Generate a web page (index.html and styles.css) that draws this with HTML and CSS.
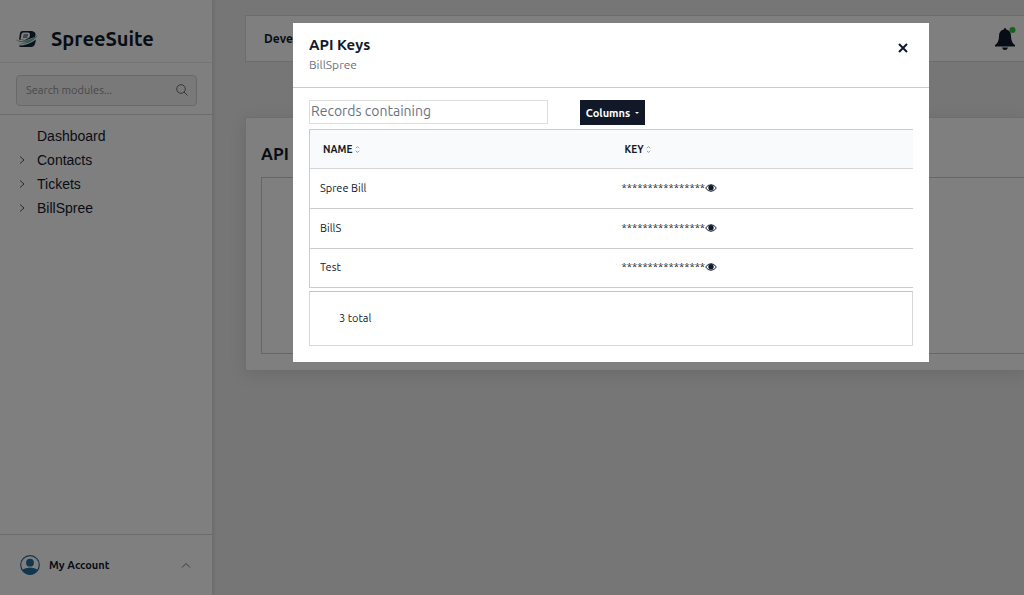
FILE: index.html
```html
<!DOCTYPE html>
<html lang="en">
<head>
<meta charset="utf-8">
<meta name="viewport" content="width=device-width, initial-scale=1">
<title>SpreeSuite</title>
<link rel="stylesheet" href="styles.css">
</head>
<body>
<div class="app">
  <aside class="sidebar">
    <div class="brand">
      <svg class="brand-logo" viewBox="0 0 22 18" aria-hidden="true">
        <path d="M3 9.500L4 3Q4.400 1 6.500 1H16q4 1 3.500 4L19 7 9 10.500z" fill="#172437"/>
        <path d="M4.500 9.500L5.500 4Q5.800 2.500 7.500 2.500H12q2 0 2 2L13.500 7.500 9 10z" fill="#fff"/>
        <path d="M7.500 5h4.500M7 7h4.500" stroke="#172437"/>
        <path d="M3 15.500q9 0 17-6L19 14q-1 3-4 3H5q-2 0-2-1.500z" fill="#172437"/>
        <path d="M0 9.500q3 2 8 1.200Q16 9.500 22 5q-4 6-10 8-7 2-10 1 6-.5 9-2-9 1-11-2.500z" fill="#62b9ac"/>
      </svg>
      <span class="brand-name">SpreeSuite</span>
    </div>
    <div class="module-search">
      <div class="search-box">
        <input class="search-input" type="text" placeholder="Search modules..." aria-label="Search modules">
        <svg class="search-icon" viewBox="0 0 12 12" aria-hidden="true"><circle cx="5" cy="5" r="4.300"/><path d="M8 8l3.500 3.500"/></svg>
      </div>
    </div>
    <nav class="nav">
      <a class="nav-item" href="#">Dashboard</a>
      <a class="nav-item" href="#"><svg class="chevron" viewBox="0 0 6 8" aria-hidden="true"><path d="M1 .5L5 4 1 7.500"/></svg>Contacts</a>
      <a class="nav-item" href="#"><svg class="chevron" viewBox="0 0 6 8" aria-hidden="true"><path d="M1 .5L5 4 1 7.500"/></svg>Tickets</a>
      <a class="nav-item" href="#"><svg class="chevron" viewBox="0 0 6 8" aria-hidden="true"><path d="M1 .5L5 4 1 7.500"/></svg>BillSpree</a>
    </nav>
    <button class="account" type="button">
      <svg class="avatar" viewBox="0 0 20 20" aria-hidden="true">
        <circle cx="10" cy="10" r="9.300" fill="none" stroke="#226f9e" stroke-width="1.200"/>
        <circle cx="10" cy="7.700" r="3.900" fill="#226f9e"/>
        <path d="M2 15q3-2.500 8-2.500t8 2.500q-3 4.700-8 4.700T2 15z" fill="#226f9e"/>
      </svg>
      <span>My Account</span>
      <svg class="account-caret" viewBox="0 0 10 6" aria-hidden="true"><path d="M1 5.500l4-4 4 4"/></svg>
    </button>
  </aside>
  <main class="main">
    <header class="topbar">
      <h1 class="topbar-title">Developer</h1>
      <button class="bell" type="button" aria-label="Notifications">
        <svg class="bell-icon" viewBox="0 0 22 24" aria-hidden="true">
          <path d="M11 1q1.200 0 1.200 1.500Q17 3.500 17 9q0 6.500 4 9v1.500H1V18q4-2.500 4-9 0-5.500 4.800-6.500Q9.800 1 11 1zM8 20.500h6q-.6 2.500-3 2.500t-3-2.500z" fill="#111a2b"/>
          <circle cx="18.500" cy="3" r="3" fill="#2bc43c"/>
        </svg>
      </button>
    </header>
    <section class="card">
      <h2 class="card-title">API Keys</h2>
      <div class="card-table"></div>
    </section>
  </main>
</div>
<div class="backdrop">
  <section class="dialog" role="dialog" aria-modal="true" aria-labelledby="dialog-title">
    <header class="dialog-head">
      <div>
        <h2 class="dialog-title" id="dialog-title">API Keys</h2>
        <p class="dialog-subtitle">BillSpree</p>
      </div>
      <button class="close" type="button" aria-label="Close">
        <svg class="close-icon" viewBox="0 0 10 10" aria-hidden="true"><path d="M1 1l8 8M9 1L1 9"/></svg>
      </button>
    </header>
    <div class="dialog-body">
      <div class="toolbar">
        <input class="filter" type="text" placeholder="Records containing" aria-label="Records containing">
        <button class="columns" type="button">Columns <span class="columns-caret"></span></button>
      </div>
      <table class="keys">
        <thead>
          <tr>
            <th>NAME <svg class="sort" viewBox="0 0 6 8" aria-hidden="true"><path d="M1 2.500l2-2 2 2M1 5.500l2 2 2-2"/></svg></th>
            <th>KEY <svg class="sort" viewBox="0 0 6 8" aria-hidden="true"><path d="M1 2.500l2-2 2 2M1 5.500l2 2 2-2"/></svg></th>
          </tr>
        </thead>
        <tbody>
          <tr><td>Spree Bill</td><td><span class="key"><span>****************</span><button class="reveal" type="button" aria-label="Show key"><svg class="eye" viewBox="0 0 12 8" aria-hidden="true"><path d="M.6 4Q3 .7 6 .7T11.400 4Q9 7.300 6 7.300T.6 4z"/><circle cx="6" cy="3.700" r="2.700"/></svg></button></span></td></tr>
          <tr><td>BillS</td><td><span class="key"><span>****************</span><button class="reveal" type="button" aria-label="Show key"><svg class="eye" viewBox="0 0 12 8" aria-hidden="true"><path d="M.6 4Q3 .7 6 .7T11.400 4Q9 7.300 6 7.300T.6 4z"/><circle cx="6" cy="3.700" r="2.700"/></svg></button></span></td></tr>
          <tr><td>Test</td><td><span class="key"><span>****************</span><button class="reveal" type="button" aria-label="Show key"><svg class="eye" viewBox="0 0 12 8" aria-hidden="true"><path d="M.6 4Q3 .7 6 .7T11.400 4Q9 7.300 6 7.300T.6 4z"/><circle cx="6" cy="3.700" r="2.700"/></svg></button></span></td></tr>
        </tbody>
      </table>
      <div class="total">3 total</div>
    </div>
  </section>
</div>
</body>
</html>
```
FILE: styles.css
```css
* { box-sizing: border-box; }
body {
  margin: 0;
  font-family: Ubuntu, "Noto Sans", sans-serif;
  font-size: 11px;
  color: #111a2b;
  background: #ececec;
}
h1, h2, p { margin: 0; }
button, input { font: inherit; color: inherit; }
button { padding: 0; border: 0; background: none; }
svg { display: block; fill: none; flex: none; }

.app { display: flex; min-height: 100vh; overflow: hidden; }
.sidebar {
  display: flex;
  flex-direction: column;
  flex: none;
  width: 213px;
  background: #fff;
  border-right: 1px solid #dcdcdc;
  box-shadow: 1px 0 3px rgba(0, 0, 0, 0.1);
}
.brand {
  display: flex;
  align-items: center;
  gap: 13px;
  height: 63px;
  padding: 15px 16px 0;
  border-bottom: 1px solid #eceae8;
}
.brand-logo { width: 22px; height: 18px; }
.brand-name { font-size: 20px; font-weight: 700; line-height: 24px; }
.module-search { padding: 12px 15px 8px 16px; border-bottom: 1px solid #d8d8d8; }
.search-box {
  display: flex;
  align-items: center;
  height: 31px;
  padding: 0 8px 2px 9px;
  background: #f3f3f3;
  border: 1px solid #d2d2d2;
  border-radius: 4px;
}
.search-input { flex: 1; min-width: 0; padding: 0; border: 0; outline: 0; background: none; font-size: 11px; }
.search-input::placeholder { color: #929292; opacity: 1; }
.search-icon { width: 12px; height: 12px; stroke: #6d6d6d; }
.nav { flex: 1; padding: 9px 16px; }
.nav-item {
  display: flex;
  align-items: center;
  position: relative;
  height: 24px;
  padding-left: 21px;
  font-family: "Liberation Sans", Arial, sans-serif;
  font-size: 14px;
  color: #111a2b;
  text-decoration: none;
}
.chevron { position: absolute; left: 3px; width: 6px; height: 8px; stroke: #555; }
.account {
  display: flex;
  align-items: center;
  gap: 9px;
  height: 61px;
  padding: 0 21px 0 20px;
  border-top: 1px solid #d8d8d8;
  font-weight: 700;
}
.avatar { width: 20px; height: 20px; }
.account-caret { width: 10px; height: 6px; margin-left: auto; stroke: #777; }

.main { flex: 1; min-width: 0; padding: 15px 0 0 32px; }
.topbar {
  display: flex;
  align-items: center;
  justify-content: space-between;
  height: 47px;
  padding: 0 8px 0 18px;
  background: #fff;
  border: 1px solid #d8d8d8;
  border-right: 0;
}
.topbar-title { font-size: 12px; }
.bell-icon { width: 22px; height: 24px; }
.card {
  margin-top: 55px;
  padding: 24px 0 16px 15px;
  background: #fff;
  border: 1px solid #dcdcdc;
  border-right: 0;
  box-shadow: 0 3px 16px rgba(0, 0, 0, 0.1);
}
.card-title { font-size: 17px; line-height: 24px; }
.card-table { height: 177px; margin-top: 11px; border: 1px solid #ccc; border-right: 0; }

.backdrop {
  position: fixed;
  inset: 0;
  padding: 23px 95px 0 293px;
  background: rgba(0, 0, 0, 0.5);
}
.dialog { background: #fff; }
.dialog-head {
  display: flex;
  align-items: center;
  justify-content: space-between;
  height: 65px;
  padding: 0 21px 0 16px;
  border-bottom: 1px solid #ccc;
}
.dialog-title { font-size: 15px; line-height: 20px; }
.dialog-subtitle { font-size: 12px; line-height: 20px; color: #6b7280; }
.close { padding-bottom: 14px; }
.close-icon { width: 10px; height: 10px; stroke: #111a2b; stroke-width: 2; }
.dialog-body { padding: 12px 16px 16px; }
.toolbar { display: flex; gap: 32px; height: 29px; }
.filter {
  width: 239px;
  height: 24px;
  padding: 0 1px 2px;
  border: 1px solid #ddd;
  font-size: 14px;
}
.filter::placeholder { color: #6b7280; opacity: 1; }
.columns {
  display: flex;
  align-items: center;
  justify-content: center;
  gap: 5px;
  width: 65px;
  height: 25px;
  background: #111827;
  color: #fff;
  font-size: 11px;
  font-weight: 700;
}
.columns-caret { border: 2px solid transparent; border-top-color: #fff; border-bottom: 0; }
.keys {
  width: 100%;
  table-layout: fixed;
  border-spacing: 0;
  border-top: 1px solid #ccc;
  border-left: 1px solid #ccc;
}
.keys th {
  height: 39px;
  padding: 0 13px;
  background: #f9fafb;
  border-bottom: 1px solid #d4d7da;
  font-size: 10px;
  text-align: left;
}
.keys td { height: 40px; padding: 0 10px 2px; border-bottom: 1px solid #ccc; }
.keys tr:last-child td { height: 39px; }
.sort { display: inline-block; width: 5px; height: 7px; stroke: #888; vertical-align: middle; }
.key { display: flex; align-items: center; }
.eye { width: 12px; height: 8px; stroke: #111a2b; }
.eye circle { fill: #111a2b; stroke: none; }
.total {
  display: flex;
  align-items: center;
  height: 55px;
  margin-top: 3px;
  padding: 0 29px 2px;
  border: 1px solid #d8d8d8;
  border-top-color: #c4c4c4;
}
```
